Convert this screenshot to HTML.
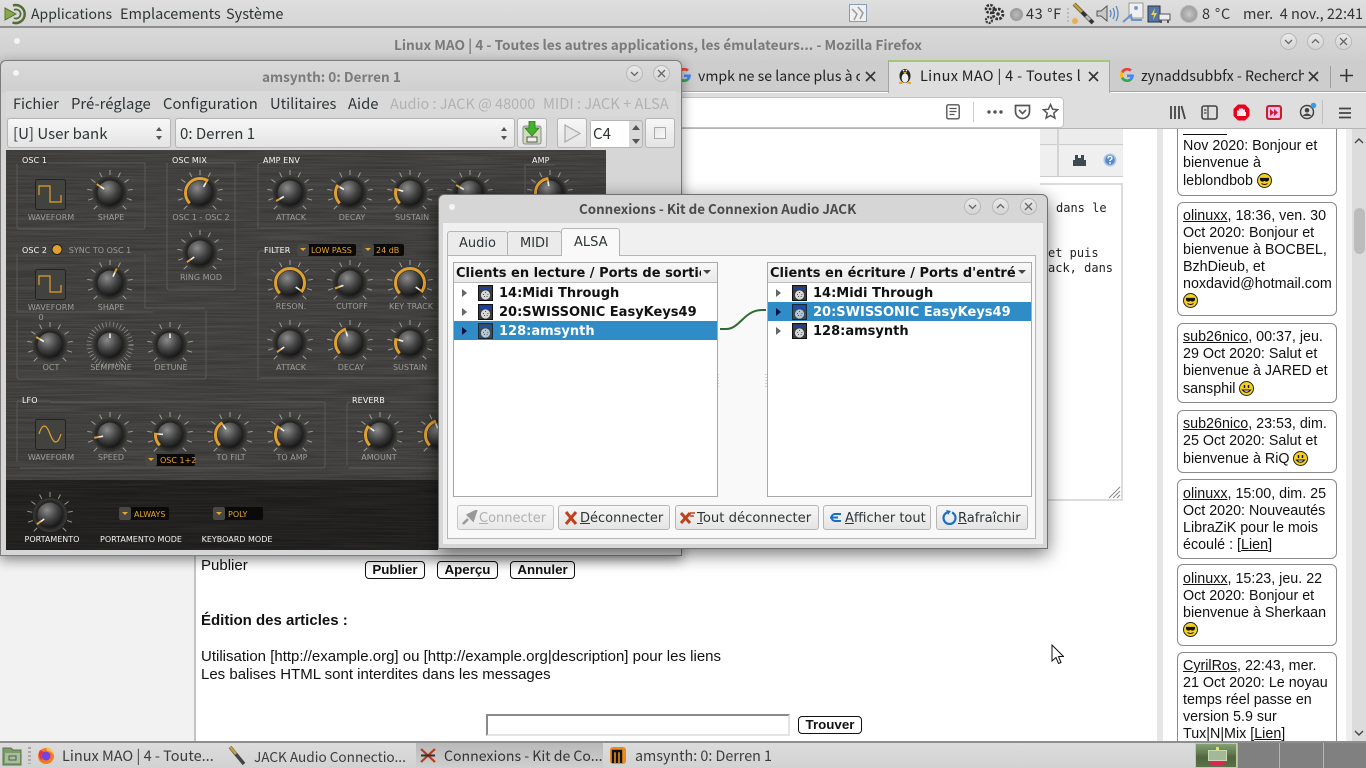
<!DOCTYPE html>
<html lang="fr"><head><meta charset="utf-8"><title>Linux MAO</title>
<style>
html,body{margin:0;padding:0;width:1366px;height:768px;overflow:hidden;background:#fff}
body{position:relative;font-family:"Liberation Sans",sans-serif}
div,span.a{box-sizing:border-box}
.b{position:absolute}
.t{position:absolute;white-space:nowrap;height:18px;line-height:18px}
.ui{font-family:"Noto Sans CJK SC","DejaVu Sans",sans-serif;font-size:14.5px;color:#3c3c3c}
.dj{font-family:"DejaVu Sans",sans-serif;font-size:13px;color:#2e3436}
.pg{font-family:"Liberation Sans",sans-serif;font-size:15px;color:#111}
.wbtn{position:absolute;width:17px;height:17px;border-radius:50%;background:linear-gradient(#e9e9e9,#d4d4d4);border:1px solid #b8b8b8}
.wbtn svg{position:absolute;left:3px;top:3px}
.gb{position:absolute;background:linear-gradient(#f7f7f7,#e4e4e4);border:1px solid #b5b5b5;border-radius:3px}
.fb{position:absolute;background:#fff;border:1px solid #111;border-radius:4px;font:bold 13.33px "Liberation Sans",sans-serif;color:#111;text-align:center;height:18px;line-height:16px}
.sb{position:absolute;left:1177px;width:160px;background:#fff;border:1px solid #8a8a8a;border-radius:6px;font:14.3px/17px "Liberation Sans",sans-serif;color:#111;padding:5px 0 0 5px;white-space:nowrap;overflow:hidden}
.sb u{text-decoration:underline}
.sm{display:inline-block;vertical-align:-3px;width:15px;height:15px}
.dn{position:relative;top:1px}
.row{position:absolute;height:19px;font:bold 13px/19px "DejaVu Sans",sans-serif;color:#111;white-space:nowrap}
.sel{background:#308cc6;color:#fff}
text{font-family:"DejaVu Sans",sans-serif}
.arc{fill:none;stroke:#e0a030;stroke-width:3}
</style></head><body>

<svg width="0" height="0" style="position:absolute"><defs>
<radialGradient id="ball" cx=".38" cy=".3" r=".8"><stop offset="0" stop-color="#8b8b8b"/><stop offset=".5" stop-color="#444"/><stop offset="1" stop-color="#0b0b0b"/></radialGradient>
<radialGradient id="ring" cx=".5" cy=".5" r=".5"><stop offset=".7" stop-color="#1c1c1b"/><stop offset="1" stop-color="#3a3a38"/></radialGradient>
<g id="tk" stroke="#b4b4b0" stroke-width="1" opacity=".8" fill="none">
<path d="M0-18V-23" transform="rotate(-135)"/><path d="M0-18V-23" transform="rotate(-108)"/><path d="M0-18V-23" transform="rotate(-81)"/><path d="M0-18V-23" transform="rotate(-54)"/><path d="M0-18V-23" transform="rotate(-27)"/><path d="M0-18V-23"/><path d="M0-18V-23" transform="rotate(27)"/><path d="M0-18V-23" transform="rotate(54)"/><path d="M0-18V-23" transform="rotate(81)"/><path d="M0-18V-23" transform="rotate(108)"/><path d="M0-18V-23" transform="rotate(135)"/>
</g>
<g id="k"><use href="#tk"/><circle r="17" fill="url(#ring)"/><circle r="12.5" fill="url(#ball)"/></g>
<g id="p"><path d="M0-11.5V-16" stroke="#e0a030" stroke-width="2"/><path d="M0-7V-11.5" stroke="#f0f0f0" stroke-width="1.6"/></g>
<g id="sm1"><circle cx="7.5" cy="7.5" r="7" fill="#f5d020" stroke="#222" stroke-width="1"/><path d="M3 5.5h9M3.5 5.5q0 2.5 2 2.5t2-2.5M7.5 5.5q0 2.5 2 2.5t2-2.5" stroke="#111" stroke-width="1.2" fill="#111"/><path d="M4.5 10.5q3 2 6 0" stroke="#111" fill="none"/></g>
<g id="sm2"><circle cx="7.5" cy="7.5" r="7" fill="#f5d020" stroke="#222" stroke-width="1"/><path d="M5.5 4v3M9.5 4v3" stroke="#111" stroke-width="1.4"/><path d="M3.5 9q4 4.5 8 0z" fill="#fff" stroke="#111"/></g>
<g id="mid"><rect x=".5" y=".5" width="14" height="15" fill="#3a3a3a" stroke="#111"/><rect x="2" y="2" width="11" height="3" fill="#1c3e9c"/><circle cx="7.5" cy="10" r="4.6" fill="#d8d8d8"/><path d="M5 9.500h.8M7 7.500h.8M9.500 9.500h.8M6 11.500h.8M8.700 11.500h.8" stroke="#333"/></g>
<g id="G"><path d="M13 6.5H7v2.6h3.5c-.4 1.6-1.7 2.4-3.5 2.4a4.5 4.5 0 010-9c1.1 0 2.1.4 2.9 1l1.9-1.9A7 7 0 107 14c3.8 0 6.9-2.7 6.9-7 0-.2 0-.4-.1-.5z" fill="#4285f4"/><path d="M1 3.5L3.3 5.2A4.5 4.5 0 017 2.5c1.1 0 2.1.4 2.9 1l1.9-1.9A7 7 0 001 3.5z" fill="#ea4335"/><path d="M1 10.5A7 7 0 007 14c1.8 0 3.5-.6 4.7-1.8l-2.2-1.7c-.7.5-1.5.9-2.5.9a4.5 4.5 0 01-3.7-2.4z" fill="#34a853"/><path d="M1 3.5a7 7 0 000 7l2.3-1.7a4.5 4.5 0 010-3.6z" fill="#fbbc05"/></g>
<filter id="br" x="0" y="0" width="100%" height="100%"><feTurbulence type="fractalNoise" baseFrequency=".012 .7" numOctaves="2" seed="4"/><feColorMatrix values="0 0 0 0 .9  0 0 0 0 .9  0 0 0 0 .88  0 0 0 .55 -.15"/></filter>
</defs></svg>

<!-- ============== FIREFOX ============== -->
<div class="b" style="left:0;top:28px;width:1366px;height:32px;background:linear-gradient(#d9d9d9,#cfcfcf)"></div>
<div class="b" style="left:14px;top:38px;width:6px;height:6px;background:#f4f4f4;border-radius:50%"></div>
<div class="t ui" style="left:394px;top:35px;font-weight:700;font-size:13.66px;color:#7a7a7a">Linux MAO | 4 - Toutes les autres applications, les émulateurs... - Mozilla Firefox</div>
<div class="wbtn" style="left:1280px;top:33px"><svg width="9" height="9"><path d="M1 3l3.5 3.5L8 3" fill="none" stroke="#666" stroke-width="1.3"/></svg></div>
<div class="wbtn" style="left:1307px;top:33px"><svg width="9" height="9"><path d="M1 6l3.5-3.5L8 6" fill="none" stroke="#666" stroke-width="1.3"/></svg></div>
<div class="wbtn" style="left:1335px;top:33px"><svg width="9" height="9"><path d="M1 1l7 7M8 1L1 8" fill="none" stroke="#666" stroke-width="1.3"/></svg></div>

<!-- page -->
<div class="b" style="left:0;top:129px;width:196px;height:613px;background:#f2f2f2;border-right:2px solid #c4c4c4"></div>
<div class="b" style="left:196px;top:129px;width:961px;height:613px;background:#fff"></div>
<div class="b" style="left:1157px;top:129px;width:6px;height:613px;background:#e6e6e6"></div>
<div class="b" style="left:1346px;top:129px;width:6px;height:613px;background:#eeeeee"></div>
<div class="b" style="left:1352px;top:129px;width:14px;height:613px;background:#dcdcdc"></div>
<svg class="b" style="left:1353px;top:137px" width="12" height="8"><path d="M2 6l4-4 4 4" fill="none" stroke="#444" stroke-width="1.400"/></svg>
<svg class="b" style="left:1353px;top:729px" width="12" height="8"><path d="M2 2l4 4 4-4" fill="none" stroke="#444" stroke-width="1.400"/></svg>
<div class="b" style="left:1354px;top:208px;width:11px;height:46px;background:#bcbcbc;border-radius:6px"></div>

<div class="b" style="left:1040px;top:129px;width:83px;height:16px;background:#ececec;border-bottom:1px solid #ccc"></div>
<div class="b" style="left:1040px;top:145px;width:83px;height:32px;background:#efefef;border-bottom:1px solid #ccc"></div>
<div class="b" style="left:1057px;top:129px;width:2px;height:47px;background:#d4d4d4"></div>
<svg class="b" style="left:1073px;top:155px" width="13" height="11"><path d="M0 5h13v6H0zM2 0h3v5H2zM8 0h3v5H8zM5 3h3v3H5z" fill="#3d4a50"/></svg>
<svg class="b" style="left:1103px;top:153px" width="14" height="14"><circle cx="7" cy="7" r="6.500" fill="#a9c6e9"/><circle cx="7" cy="7" r="4.800" fill="#5789c7"/><path d="M5 5.500q0-2 2-2t2 1.800q0 1-2 2V8" fill="none" stroke="#fff" stroke-width="1.300"/><circle cx="7" cy="10" r=".9" fill="#fff"/></svg>
<div class="b" style="left:1040px;top:183px;width:83px;height:318px;background:#fff;border:2px solid #dcdcdc;border-left:none"></div>
<svg class="b" style="left:1108px;top:486px" width="13" height="13"><path d="M12 1L1 12M12 5L5 12M12 9L9 12" stroke="#888" stroke-width="1"/></svg>
<div class="t" style="left:1056px;top:199px;font:12px/18px 'DejaVu Sans Mono',monospace;color:#222">dans le</div>
<div class="t" style="left:1048px;top:244px;font:12px/18px 'DejaVu Sans Mono',monospace;color:#222">et puis</div>
<div class="t" style="left:1048px;top:259px;font:12px/18px 'DejaVu Sans Mono',monospace;color:#222">ack, dans</div>

<div class="t pg" style="left:201px;top:557px">Publier</div>
<div class="fb" style="left:365px;top:561px;width:60px">Publier</div>
<div class="fb" style="left:437px;top:561px;width:61px">Aperçu</div>
<div class="fb" style="left:510px;top:561px;width:65px">Annuler</div>
<div class="t pg" style="left:201px;top:612px;font-weight:700">Édition des articles :</div>
<div class="t pg" style="left:201px;top:648px">Utilisation [http://example.org] ou [http://example.org|description] pour les liens</div>
<div class="t pg" style="left:201px;top:666px">Les balises HTML sont interdites dans les messages</div>
<div class="b" style="left:486px;top:714px;width:304px;height:22px;background:#fff;border:2px solid;border-color:#8a8a8a #e4e4e4 #e4e4e4 #8a8a8a"></div>
<div class="fb" style="left:798px;top:716px;width:64px">Trouver</div>

<div class="sb" style="top:120px;height:76px;padding-top:17px">Nov 2020: Bonjour et<br>bienvenue à<br><span class="dn">leblondbob <svg class="sm"><use href="#sm1"/></svg></span></div>
<div class="b" style="left:1183px;top:134px;width:44px;height:1px;background:#111"></div>
<div class="sb" style="top:202px;height:114px"><u>olinuxx</u>, 18:36, ven. 30<br>Oct 2020: Bonjour et<br>bienvenue à BOCBEL,<br>BzhDieub, et<br>noxdavid@hotmail.com<br><svg class="sm"><use href="#sm1"/></svg></div>
<div class="sb" style="top:323px;height:80px"><u>sub26nico</u>, 00:37, jeu.<br>29 Oct 2020: Salut et<br>bienvenue à JARED et<br><span class="dn">sansphil <svg class="sm"><use href="#sm2"/></svg></span></div>
<div class="sb" style="top:410px;height:63px"><u>sub26nico</u>, 23:53, dim.<br>25 Oct 2020: Salut et<br><span class="dn">bienvenue à RiQ <svg class="sm"><use href="#sm2"/></svg></span></div>
<div class="sb" style="top:479px;height:80px;padding-top:6px"><u>olinuxx</u>, 15:00, dim. 25<br>Oct 2020: Nouveautés<br>LibraZiK pour le mois<br>écoulé : [<u>Lien</u>]</div>
<div class="sb" style="top:564px;height:82px;padding-top:6px"><u>olinuxx</u>, 15:23, jeu. 22<br>Oct 2020: Bonjour et<br>bienvenue à Sherkaan<br><svg class="sm"><use href="#sm1"/></svg></div>
<div class="sb" style="top:652px;height:100px"><u>CyrilRos</u>, 22:43, mer.<br>21 Oct 2020: Le noyau<br>temps réel passe en<br>version 5.9 sur<br>Tux|N|Mix [<u>Lien</u>]</div>

<svg class="b" style="left:1051px;top:644px" width="13" height="21"><path d="M1 1v16l4-3.500 2.500 6 2.500-1-2.500-6h5z" fill="#fff" stroke="#111" stroke-width="1"/></svg>

<!-- tabs -->
<div class="b" style="left:0;top:60px;width:1366px;height:32px;background:#cdcdcd;border-bottom:1px solid #a5a5a5"></div>
<svg class="b" style="left:677px;top:68px" width="15" height="15"><use href="#G"/></svg>
<div class="t ui" style="left:698px;top:67px;color:#222;width:162px;overflow:hidden;font-size:14.1px">vmpk ne se lance plus à c</div>
<svg class="b" style="left:865px;top:71px" width="11" height="11"><path d="M1 1l9 9M10 1l-9 9" stroke="#333" stroke-width="1.6"/></svg>
<div class="b" style="left:888px;top:60px;width:222px;height:33px;background:#dedede;border-top:2px solid #a6c678;border-left:1px solid #a5a5a5;border-right:1px solid #a5a5a5"></div>
<svg class="b" style="left:897px;top:67px" width="16" height="17" viewBox="0 0 16 17"><ellipse cx="8" cy="9" rx="5.5" ry="7" fill="#222"/><ellipse cx="8" cy="11" rx="3.4" ry="4.6" fill="#eee"/><path d="M6 5h4l-2 2z" fill="#eba81c"/><path d="M2 15h4l-1 2H2zM10 15h4v2h-3z" fill="#eba81c"/><circle cx="6.6" cy="3.6" r=".9" fill="#fff"/><circle cx="9.4" cy="3.6" r=".9" fill="#fff"/></svg>
<div class="t ui" style="left:920px;top:67px;color:#222;width:163px;overflow:hidden;letter-spacing:.3px">Linux MAO | 4 - Toutes l</div>
<svg class="b" style="left:1088px;top:71px" width="11" height="11"><path d="M1 1l9 9M10 1l-9 9" stroke="#333" stroke-width="1.6"/></svg>
<svg class="b" style="left:1120px;top:68px" width="15" height="15"><use href="#G"/></svg>
<div class="t ui" style="left:1141px;top:67px;color:#222;width:163px;overflow:hidden;font-size:14.2px">zynaddsubbfx - Recherch</div>
<svg class="b" style="left:1308px;top:71px" width="11" height="11"><path d="M1 1l9 9M10 1l-9 9" stroke="#333" stroke-width="1.6"/></svg>
<div class="b" style="left:1330px;top:66px;width:1px;height:22px;background:#a0a0a0"></div>
<svg class="b" style="left:1340px;top:69px" width="13" height="13"><path d="M6.5 0v13M0 6.5h13" stroke="#333" stroke-width="1.6"/></svg>

<!-- toolbar -->
<div class="b" style="left:0;top:93px;width:1366px;height:36px;background:#dedede;border-bottom:1px solid #b4b4b4"></div>
<div class="b" style="left:600px;top:97px;width:464px;height:31px;background:#fff;border:1px solid #c2c2c2;border-radius:4px"></div>
<svg class="b" style="left:946px;top:104px" width="15" height="16"><rect x=".8" y=".8" width="12.4" height="14" rx="1.6" fill="none" stroke="#555" stroke-width="1.4"/><path d="M3.5 4.5h7M3.5 7.5h7M3.5 10.500h5" stroke="#555" stroke-width="1.2"/></svg>
<div class="b" style="left:973px;top:102px;width:1px;height:20px;background:#ccc"></div>
<svg class="b" style="left:986px;top:109px" width="18" height="6"><circle cx="3" cy="3" r="1.7" fill="#555"/><circle cx="9" cy="3" r="1.7" fill="#555"/><circle cx="15" cy="3" r="1.7" fill="#555"/></svg>
<svg class="b" style="left:1014px;top:104px" width="17" height="16"><path d="M1.500 1.500h14v6a7 7 0 01-14 0z" fill="none" stroke="#555" stroke-width="1.700"/><path d="M5 6l3.500 3.500L12 6" fill="none" stroke="#555" stroke-width="1.600"/></svg>
<svg class="b" style="left:1042px;top:103px" width="17" height="17"><path d="M8.500 1.500l2.100 4.700 5 .5-3.800 3.400 1.100 5-4.400-2.600-4.400 2.600 1.100-5L1.400 6.700l5-.5z" fill="none" stroke="#555" stroke-width="1.500"/></svg>
<svg class="b" style="left:1170px;top:105px" width="16" height="15"><path d="M1 1v13M5 1v13M9 1v13" stroke="#444" stroke-width="1.800"/><path d="M11.500 1l3.500 13" stroke="#444" stroke-width="1.800"/></svg>
<svg class="b" style="left:1201px;top:105px" width="17" height="15"><rect x="1" y="1" width="15" height="13" rx="2" fill="none" stroke="#444" stroke-width="1.600"/><path d="M7 1.500v12M3 5h2.500M3 8h2.500" stroke="#444" stroke-width="1.300"/></svg>
<svg class="b" style="left:1233px;top:104px" width="17" height="17" viewBox="0 0 17 17"><path d="M5 .5h7L16.500 5v7L12 16.500H5L.5 12V5z" fill="#e8001c"/><path d="M5 12V6.500M7 12V4.500M9 12V4.500M11 12V5.500M12 12V8" stroke="#fff" stroke-width="1.800"/></svg>
<svg class="b" style="left:1266px;top:105px" width="16" height="15"><rect width="16" height="15" rx="3" fill="#c4212a"/><rect x="2" y="2" width="12" height="11" rx="1.500" fill="#fbe"/><path d="M4 4l4 3.500L4 11zM8 4l4 3.500L8 11z" fill="#c4212a"/></svg>
<svg class="b" style="left:1298px;top:102px" width="20" height="18"><circle cx="9" cy="10" r="6.500" fill="none" stroke="#444" stroke-width="1.500"/><circle cx="9" cy="8.300" r="2.300" fill="#444"/><path d="M4.500 14q4.500-5 9 0z" fill="#444"/><circle cx="15.500" cy="3.500" r="2.800" fill="#2a9ff5"/></svg>
<div class="b" style="left:1322px;top:100px;width:1px;height:24px;background:#c0c0c0"></div>
<svg class="b" style="left:1338px;top:107px" width="14" height="12"><path d="M1 1.500h12M1 6h12M1 10.500h12" stroke="#444" stroke-width="1.800"/></svg>

<!-- ============== AMSYNTH ============== -->
<div class="b" style="left:0;top:60px;width:682px;height:496px;background:#d6d6d6;border:1px solid #7c7c7c;border-radius:6px 6px 0 0;box-shadow:0 4px 12px rgba(0,0,0,.45)"></div>
<div class="b" style="left:1px;top:61px;width:680px;height:31px;background:linear-gradient(#d9d9d9,#cfcfcf);border-radius:6px 6px 0 0"></div>
<div class="b" style="left:13px;top:70px;width:6px;height:6px;background:#f4f4f4;border-radius:50%"></div>
<div class="t ui" style="left:262px;top:67px;font-weight:700;font-size:13.6px;color:#7a7a7a">amsynth: 0: Derren 1</div>
<div class="wbtn" style="left:626px;top:65px"><svg width="9" height="9"><path d="M1 3l3.500 3.500L8 3" fill="none" stroke="#666" stroke-width="1.300"/></svg></div>
<div class="wbtn" style="left:653px;top:65px"><svg width="9" height="9"><path d="M1 1l7 7M8 1L1 8" fill="none" stroke="#666" stroke-width="1.300"/></svg></div>
<div class="b" style="left:6px;top:91px;width:670px;height:25px;background:#d9d9d9"></div>
<div class="t ui" style="left:13px;top:95px;color:#2e3436">Fichier</div>
<div class="t ui" style="left:71px;top:95px;color:#2e3436;font-size:14.9px">Pré-réglage</div>
<div class="t ui" style="left:163px;top:95px;color:#2e3436;font-size:14.8px">Configuration</div>
<div class="t ui" style="left:270px;top:95px;color:#2e3436;font-size:14.7px">Utilitaires</div>
<div class="t ui" style="left:348px;top:95px;color:#2e3436;font-size:14.8px">Aide</div>
<div class="t ui" style="left:390px;top:95px;color:#b2b2b2">Audio : JACK @ 48000</div>
<div class="t ui" style="left:543px;top:95px;color:#b2b2b2;font-size:14.7px">MIDI : JACK + ALSA</div>

<div class="gb" style="left:7px;top:118px;width:164px;height:30px"></div>
<div class="t ui" style="left:13px;top:125px;color:#2e3436;font-size:15px">[U] User bank</div>
<svg class="b" style="left:155px;top:127px" width="8" height="13"><path d="M4 0l3 4H1zM4 13l3-4H1z" fill="#555"/></svg>
<div class="gb" style="left:175px;top:118px;width:340px;height:30px"></div>
<div class="t ui" style="left:180px;top:125px;color:#2e3436;font-size:15px">0: Derren 1</div>
<svg class="b" style="left:500px;top:127px" width="8" height="13"><path d="M4 0l3 4H1zM4 13l3-4H1z" fill="#555"/></svg>
<div class="gb" style="left:517px;top:118px;width:30px;height:30px"></div>
<svg class="b" style="left:522px;top:121px" width="20" height="24"><rect x="1" y="5" width="18" height="18" rx="2" fill="#d2dcb8" stroke="#889"/><rect x="5" y="16" width="10" height="5" fill="#eee" stroke="#555"/><path d="M7 0h6v7h4l-7 8-7-8h4z" fill="#45b02e" stroke="#2a7a1a" stroke-width=".8"/></svg>
<div class="gb" style="left:557px;top:118px;width:30px;height:30px"></div>
<svg class="b" style="left:564px;top:124px" width="17" height="19"><path d="M1 1l15 8.500L1 18z" fill="#e6e6e6" stroke="#aaa" stroke-width="1.200"/></svg>
<div class="b" style="left:590px;top:120px;width:53px;height:28px;background:#d9d9d9;border:1px solid #b5b5b5;border-radius:3px"></div>
<div class="b" style="left:591px;top:121px;width:38px;height:26px;background:#fff"></div>
<div class="t ui" style="left:593px;top:125px;color:#2e3436;font-size:15px">C4</div>
<svg class="b" style="left:631px;top:124px" width="10" height="21"><path d="M5 1l4 5H1zM5 20l4-5H1z" fill="#555"/></svg>
<div class="gb" style="left:645px;top:118px;width:30px;height:30px"></div>
<div class="b" style="left:654px;top:127px;width:12px;height:12px;background:linear-gradient(135deg,#e8e8e8,#f8f8f8);border:1px solid #aaa"></div>

<svg class="b" style="left:0;top:0" width="682" height="556" viewBox="0 0 682 556">
<rect x="6" y="150" width="600" height="330" fill="#3a3937"/>
<rect x="6" y="150" width="600" height="330" filter="url(#br)" opacity=".35"/>
<rect x="6" y="480" width="432" height="70" fill="#1d1c1b"/>
<rect x="6" y="480" width="432" height="70" filter="url(#br)" opacity=".2"/>
<g fill="none" stroke="#5a5956" stroke-width="1">
<path d="M17 164V226q0 3 3 3H143q2 0 2-3V163H48"/>
<path d="M167 163V287q0 3 3 3H233q2 0 2-3V163H206"/>
<path d="M258 229V166q0-3 3-3H296M260 228H440"/>
<path d="M17 254V312h136M206 311V376q0 3-2 3H20q-3 0-3-3V320M145 254V308h60"/>
<path d="M258 380V254q0-3 3-3H290M260 378H440"/>
<path d="M17 401H50M17 401V462M20 468H323q2 0 2-3V402H50"/>
<path d="M347 465V405q0-3 3-3M349 468H440M390 402H440"/>
<path d="M525 228V165H555M525 228H606"/>
</g>
<g font-size="8" fill="#f6f6f6" letter-spacing=".1">
<text x="22" y="163">OSC 1</text><text x="172" y="163">OSC MIX</text><text x="263" y="163">AMP ENV</text><text x="532" y="163">AMP</text>
<text x="22" y="253">OSC 2</text><text x="264" y="253">FILTER</text><text x="22" y="403">LFO</text><text x="352" y="403">REVERB</text>
</g>
<circle cx="57" cy="249.500" r="5" fill="#e0a030" stroke="#222"/>
<g font-size="8" fill="#9c9c98" text-anchor="middle">
<text x="100" y="253">SYNC TO OSC 1</text>
<text x="51" y="220">WAVEFORM</text><text x="111" y="220">SHAPE</text><text x="201" y="220">OSC 1 - OSC 2</text>
<text x="291" y="220">ATTACK</text><text x="352" y="220">DECAY</text><text x="412" y="220">SUSTAIN</text><text x="201" y="280">RING MOD</text>
<text x="51" y="310">WAVEFORM</text><text x="111" y="310">SHAPE</text><text x="41" y="320">0</text>
<text x="291" y="309">RESON.</text><text x="352" y="309">CUTOFF</text><text x="411" y="309">KEY TRACK</text>
<text x="51" y="370">OCT</text><text x="111" y="370">SEMITONE</text><text x="171" y="370">DETUNE</text>
<text x="291" y="370">ATTACK</text><text x="351" y="370">DECAY</text><text x="410" y="370">SUSTAIN</text>
<text x="51" y="460">WAVEFORM</text><text x="111" y="460">SPEED</text><text x="231" y="460">TO FILT</text><text x="292" y="460">TO AMP</text><text x="379" y="460">AMOUNT</text>
</g>
<g font-size="8" fill="#f2f2f2" text-anchor="middle">
<text x="52" y="542">PORTAMENTO</text><text x="141" y="542">PORTAMENTO MODE</text><text x="237" y="542">KEYBOARD MODE</text>
</g>
<!-- wave buttons -->
<g fill="#42423f" stroke="#222"><rect x="35.500" y="179.500" width="30" height="30" rx="2"/><rect x="35.500" y="269.500" width="30" height="30" rx="2"/><rect x="35.500" y="419.500" width="30" height="30" rx="2"/></g>
<g fill="none" stroke="#e0a030" stroke-width="1.200"><path d="M39 195V186H50V202H61V195"/><path d="M39 285V276H50V292H61V285"/><path d="M39 434Q44 418 50 434T61 434"/></g>
<!-- dropdowns -->
<g font-family="DejaVu Sans Mono" font-size="8" fill="#e8a630">
<rect x="297" y="244" width="59" height="12" rx="2" fill="#0a0a0a"/><rect x="297" y="244" width="12" height="12" rx="2" fill="#484846"/><path d="M300 248h6l-3 3z"/><text x="311" y="253">LOW PASS</text>
<rect x="362" y="244" width="42" height="12" rx="2" fill="#0a0a0a"/><rect x="362" y="244" width="12" height="12" rx="2" fill="#484846"/><path d="M365 248h6l-3 3z"/><text x="376" y="253">24 dB</text>
<rect x="145" y="454" width="50" height="12" rx="2" fill="#0a0a0a"/><rect x="145" y="454" width="12" height="12" rx="2" fill="#484846"/><path d="M148 458h6l-3 3z"/><text x="160" y="463">OSC 1+2</text>
<rect x="119" y="507" width="50" height="13" rx="2" fill="#0a0a0a"/><rect x="119" y="507" width="12" height="13" rx="2" fill="#484846"/><path d="M122 512h6l-3 3z"/><text x="134" y="517">ALWAYS</text>
<rect x="213" y="507" width="50" height="13" rx="2" fill="#0a0a0a"/><rect x="213" y="507" width="12" height="13" rx="2" fill="#484846"/><path d="M216 512h6l-3 3z"/><text x="228" y="517">POLY</text>
</g>
<!-- knobs -->
<g>
<g transform="translate(110,193)"><use href="#k"/><g transform="rotate(-56)"><use href="#p"/></g></g>
<g transform="translate(200,193)"><use href="#k"/><circle class="arc" r="14.500" pathLength="360" stroke-dasharray="165 360" transform="rotate(135)"/><g transform="rotate(30)"><use href="#p"/></g></g>
<g transform="translate(200,253)"><use href="#k"/><g transform="rotate(-125)"><use href="#p"/></g></g>
<g transform="translate(290,193)"><use href="#k"/><g transform="rotate(-120)"><use href="#p"/></g></g>
<g transform="translate(350,193)"><use href="#k"/><circle class="arc" r="14.500" pathLength="360" stroke-dasharray="75 360" transform="rotate(135)"/><g transform="rotate(-60)"><use href="#p"/></g></g>
<g transform="translate(410,193)"><use href="#k"/><circle class="arc" r="14.500" pathLength="360" stroke-dasharray="60 360" transform="rotate(135)"/><g transform="rotate(-75)"><use href="#p"/></g></g>
<g transform="translate(470,193)"><use href="#k"/><g transform="rotate(-60)"><use href="#p"/></g></g>
<g transform="translate(550,193)"><use href="#k"/><circle class="arc" r="14.500" pathLength="360" stroke-dasharray="125 360" transform="rotate(135)"/><g transform="rotate(-10)"><use href="#p"/></g></g>
<g transform="translate(110,283)"><use href="#k"/><g transform="rotate(25)"><use href="#p"/></g></g>
<g transform="translate(50,345)"><use href="#k"/><g transform="rotate(-60)"><use href="#p"/></g></g>
<g transform="translate(110,345)"><circle r="21" fill="none" stroke="#a8a8a4" stroke-width="5" pathLength="360" stroke-dasharray="2 8" opacity=".8"/><circle r="17" fill="url(#ring)"/><circle r="12.500" fill="url(#ball)"/><path d="M0-7V-11.500" stroke="#f0f0f0" stroke-width="1.600"/></g>
<g transform="translate(170,345)"><use href="#k"/><path d="M0-7V-11.500" stroke="#f0f0f0" stroke-width="1.600"/></g>
<g transform="translate(290,283)"><use href="#k"/><circle class="arc" r="14.500" pathLength="360" stroke-dasharray="260 360" transform="rotate(135)"/><g transform="rotate(125)"><use href="#p"/></g></g>
<g transform="translate(350,283)"><use href="#k"/><g transform="rotate(-110)"><use href="#p"/></g></g>
<g transform="translate(410,283)"><use href="#k"/><circle class="arc" r="14.500" pathLength="360" stroke-dasharray="260 360" transform="rotate(135)"/><g transform="rotate(125)"><use href="#p"/></g></g>
<g transform="translate(290,343)"><use href="#k"/><g transform="rotate(-125)"><use href="#p"/></g></g>
<g transform="translate(350,343)"><use href="#k"/><circle class="arc" r="14.500" pathLength="360" stroke-dasharray="115 360" transform="rotate(135)"/><g transform="rotate(-20)"><use href="#p"/></g></g>
<g transform="translate(410,343)"><use href="#k"/><circle class="arc" r="14.500" pathLength="360" stroke-dasharray="60 360" transform="rotate(135)"/><g transform="rotate(-75)"><use href="#p"/></g></g>
<g transform="translate(110,435)"><use href="#k"/><g transform="rotate(-100)"><use href="#p"/></g></g>
<g transform="translate(170,435)"><use href="#k"/><circle class="arc" r="14.500" pathLength="360" stroke-dasharray="50 360" transform="rotate(135)"/><g transform="rotate(-85)"><use href="#p"/></g></g>
<g transform="translate(230,435)"><use href="#k"/><circle class="arc" r="14.500" pathLength="360" stroke-dasharray="100 360" transform="rotate(135)"/><g transform="rotate(-35)"><use href="#p"/></g></g>
<g transform="translate(290,435)"><use href="#k"/><circle class="arc" r="14.500" pathLength="360" stroke-dasharray="80 360" transform="rotate(135)"/><g transform="rotate(-55)"><use href="#p"/></g></g>
<g transform="translate(380,435)"><use href="#k"/><circle class="arc" r="14.500" pathLength="360" stroke-dasharray="80 360" transform="rotate(135)"/><g transform="rotate(-55)"><use href="#p"/></g></g>
<g transform="translate(440,435)"><use href="#k"/><circle class="arc" r="14.500" pathLength="360" stroke-dasharray="115 360" transform="rotate(135)"/><g transform="rotate(-20)"><use href="#p"/></g></g>
<g transform="translate(50,515)"><use href="#k"/><g transform="rotate(-125)"><use href="#p"/></g></g>
</g>
</svg>

<!-- ============== DIALOG ============== -->
<div class="b" style="left:438px;top:194px;width:610px;height:355px;background:#d6d6d6;border:1px solid #6f6f6f;border-radius:6px 6px 0 0;box-shadow:0 5px 18px rgba(0,0,0,.55)"></div>
<div class="b" style="left:449px;top:204px;width:6px;height:6px;background:#f4f4f4;border-radius:50%"></div>
<div class="t ui" style="left:579px;top:200px;font-weight:700;font-size:13.35px;color:#4a4a4a">Connexions - Kit de Connexion Audio JACK</div>
<div class="wbtn" style="left:964px;top:198px"><svg width="9" height="9"><path d="M1 3l3.500 3.500L8 3" fill="none" stroke="#666" stroke-width="1.300"/></svg></div>
<div class="wbtn" style="left:992px;top:198px"><svg width="9" height="9"><path d="M1 6l3.500-3.500L8 6" fill="none" stroke="#666" stroke-width="1.300"/></svg></div>
<div class="wbtn" style="left:1020px;top:198px"><svg width="9" height="9"><path d="M1 1l7 7M8 1L1 8" fill="none" stroke="#666" stroke-width="1.300"/></svg></div>
<div class="b" style="left:443px;top:223px;width:600px;height:321px;background:#f0f0f0"></div>
<div class="b" style="left:447px;top:255px;width:589px;height:284px;background:#f9f9f9;border:1px solid #b5b5b5"></div>
<div class="b" style="left:447px;top:231px;width:61px;height:25px;background:#ebebeb;border:1px solid #b5b5b5;border-radius:3px 3px 0 0"></div>
<div class="b" style="left:507px;top:231px;width:55px;height:25px;background:#ebebeb;border:1px solid #b5b5b5;border-radius:3px 3px 0 0"></div>
<div class="b" style="left:561px;top:228px;width:59px;height:28px;background:#f9f9f9;border:1px solid #b5b5b5;border-bottom:none;border-radius:3px 3px 0 0"></div>
<div class="t dj" style="left:459px;top:235px">Audio</div>
<div class="t dj" style="left:520px;top:235px">MIDI</div>
<div class="t dj" style="left:574px;top:234px">ALSA</div>

<div class="b" style="left:453px;top:262px;width:265px;height:235px;background:#fff;border:1px solid #a8a8a8"></div>
<div class="b" style="left:454px;top:263px;width:263px;height:20px;background:linear-gradient(#f8f8f8,#e9e9e9);border-bottom:1px solid #bdbdbd"></div>
<div class="row" style="left:456px;top:264px;width:245px;overflow:hidden">Clients en lecture / Ports de sortie</div>
<svg class="b" style="left:703px;top:270px" width="9" height="5"><path d="M0 0h8l-4 4z" fill="#444"/></svg>
<div class="b sel" style="left:454px;top:321px;width:263px;height:19px"></div>
<svg class="b" style="left:462px;top:289px" width="5" height="8"><path d="M0 0l5 4-5 4z" fill="#666"/></svg>
<svg class="b" style="left:462px;top:308px" width="5" height="8"><path d="M0 0l5 4-5 4z" fill="#666"/></svg>
<svg class="b" style="left:462px;top:327px" width="5" height="8"><path d="M0 0l5 4-5 4z" fill="#114"/></svg>
<svg class="b" style="left:478px;top:285px" width="15" height="16"><use href="#mid"/></svg>
<svg class="b" style="left:478px;top:304px" width="15" height="16"><use href="#mid"/></svg>
<svg class="b" style="left:478px;top:323px" width="15" height="16" opacity=".8"><use href="#mid"/></svg>
<div class="row" style="left:499px;top:284px">14:Midi Through</div>
<div class="row" style="left:499px;top:303px">20:SWISSONIC EasyKeys49</div>
<div class="row" style="left:499px;top:322px;color:#fff">128:amsynth</div>

<svg class="b" style="left:718px;top:305px" width="50" height="30"><path d="M2 24h6c14 0 18-19 36-19h4" fill="none" stroke="#2f6a33" stroke-width="2"/></svg>
<svg class="b" style="left:717px;top:373px" width="4" height="16"><path d="M1 1v14" stroke="#aaa" stroke-dasharray="1 2"/></svg>
<svg class="b" style="left:765px;top:373px" width="4" height="16"><path d="M1 1v14" stroke="#aaa" stroke-dasharray="1 2"/></svg>

<div class="b" style="left:767px;top:262px;width:265px;height:235px;background:#fff;border:1px solid #a8a8a8"></div>
<div class="b" style="left:768px;top:263px;width:263px;height:20px;background:linear-gradient(#f8f8f8,#e9e9e9);border-bottom:1px solid #bdbdbd"></div>
<div class="row" style="left:770px;top:264px;width:246px;overflow:hidden">Clients en écriture / Ports d'entrée</div>
<svg class="b" style="left:1018px;top:270px" width="9" height="5"><path d="M0 0h8l-4 4z" fill="#444"/></svg>
<div class="b sel" style="left:768px;top:302px;width:263px;height:19px"></div>
<svg class="b" style="left:776px;top:289px" width="5" height="8"><path d="M0 0l5 4-5 4z" fill="#666"/></svg>
<svg class="b" style="left:776px;top:308px" width="5" height="8"><path d="M0 0l5 4-5 4z" fill="#114"/></svg>
<svg class="b" style="left:776px;top:327px" width="5" height="8"><path d="M0 0l5 4-5 4z" fill="#666"/></svg>
<svg class="b" style="left:792px;top:285px" width="15" height="16"><use href="#mid"/></svg>
<svg class="b" style="left:792px;top:304px" width="15" height="16" opacity=".8"><use href="#mid"/></svg>
<svg class="b" style="left:792px;top:323px" width="15" height="16"><use href="#mid"/></svg>
<div class="row" style="left:813px;top:284px">14:Midi Through</div>
<div class="row" style="left:813px;top:303px;color:#fff">20:SWISSONIC EasyKeys49</div>
<div class="row" style="left:813px;top:322px">128:amsynth</div>

<div class="gb" style="left:457px;top:505px;width:97px;height:25px;opacity:.75"></div>
<svg class="b" style="left:462px;top:510px" width="16" height="15"><path d="M1 14l5-5M6 5l5 5 3-9z" stroke="#999" stroke-width="2.500" fill="#999"/></svg>
<div class="t dj" style="left:479px;top:510px;color:#b0b0b0"><u>C</u>onnecter</div>
<div class="gb" style="left:558px;top:505px;width:112px;height:25px"></div>
<svg class="b" style="left:564px;top:511px" width="14" height="14"><path d="M2 1l10 12M12 1L2 13" stroke="#c0401c" stroke-width="3"/></svg>
<div class="t dj" style="left:580px;top:510px"><u>D</u>éconnecter</div>
<div class="gb" style="left:675px;top:505px;width:144px;height:25px"></div>
<svg class="b" style="left:680px;top:511px" width="16" height="14"><path d="M1 2l9 10M10 2l-9 10" stroke="#c0401c" stroke-width="3"/><path d="M10 2h5M10 5h4" stroke="#c0401c" stroke-width="1.500"/></svg>
<div class="t dj" style="left:697px;top:510px;font-size:13.2px"><u>T</u>out déconnecter</div>
<div class="gb" style="left:823px;top:505px;width:108px;height:25px"></div>
<svg class="b" style="left:829px;top:511px" width="14" height="13"><path d="M12 3H6a3.500 3.500 0 000 7h6M1 6.500h8" fill="none" stroke="#1a6fc4" stroke-width="2"/></svg>
<div class="t dj" style="left:845px;top:510px"><u>A</u>fficher tout</div>
<div class="gb" style="left:936px;top:505px;width:92px;height:25px"></div>
<svg class="b" style="left:942px;top:510px" width="15" height="15"><path d="M10 2.500a6 6 0 11-5 0" fill="none" stroke="#1a6fc4" stroke-width="2.200"/><path d="M4 0l5 1-3 4z" fill="#1a6fc4"/></svg>
<div class="t dj" style="left:958px;top:510px"><u>R</u>afraîchir</div>

<!-- ============== TOP PANEL ============== -->
<div class="b" style="left:0;top:0;width:1366px;height:28px;background:linear-gradient(#dfdfdf,#d5d5d5);border-bottom:2px solid #8e8e8e"></div>
<svg class="b" style="left:4px;top:2px" width="24" height="24" viewBox="0 0 24 24"><path d="M9 3.500a9 9 0 11-.5 17" fill="none" stroke="#556b35" stroke-width="2.500"/><path d="M10 8a4.500 4.500 0 110 8" fill="none" stroke="#556b35" stroke-width="1.800"/><path d="M1 6l11 6-11 6z" fill="#87a84e" stroke="#5c7536"/></svg>
<div class="t ui" style="left:31px;top:5px;color:#2e3436;font-size:14px">Applications</div>
<div class="t ui" style="left:120px;top:5px;color:#2e3436">Emplacements</div>
<div class="t ui" style="left:226px;top:5px;color:#2e3436">Système</div>
<svg class="b" style="left:849px;top:4px" width="18" height="18"><rect x=".5" y=".5" width="17" height="17" fill="#eef0f2" stroke="#8a9ab0"/><path d="M3 5l5 5-3 6M9 3l5 6-3 6" fill="none" stroke="#9a9a9a" stroke-width="1.500"/></svg>
<svg class="b" style="left:983px;top:3px" width="22" height="22"><circle cx="7" cy="6" r="4" fill="#ddd" stroke="#333" stroke-width="2.600" stroke-dasharray="2.500 1.300"/><circle cx="7" cy="6" r="1.400" fill="#333"/><circle cx="15" cy="11" r="5" fill="#ddd" stroke="#333" stroke-width="2.800" stroke-dasharray="2.600 1.300"/><circle cx="15" cy="11" r="1.800" fill="#333"/><circle cx="6" cy="17" r="3" fill="#ddd" stroke="#333" stroke-width="2.200" stroke-dasharray="2 1"/></svg>
<div class="b" style="left:1010px;top:8px;width:13px;height:13px;border-radius:50%;background:radial-gradient(#bbb,#999 70%,#ccc)"></div>
<div class="t ui" style="left:1026px;top:5px;color:#333;letter-spacing:.6px">43 °F</div>
<svg class="b" style="left:1065px;top:2px" width="30" height="23"><path d="M9 2l19 19" stroke="#333" stroke-width="4"/><path d="M9 2l8 8" stroke="#c2a13c" stroke-width="3"/><path d="M21 14l4 4" stroke="#bbb" stroke-width="3"/><path d="M3 6v14" stroke="#bbb" stroke-dasharray="2 2" stroke-width="2"/><circle cx="10" cy="19" r="3" fill="#e8b050"/></svg>
<svg class="b" style="left:1096px;top:4px" width="24" height="20"><path d="M1 7h4l6-5v15l-6-5H1z" fill="#c8c8c8" stroke="#555"/><path d="M14 6q2 3.500 0 7M17 4q3 5.500 0 11M20 2q4 7.500 0 15" fill="none" stroke="#5a88c0" stroke-width="1.300"/></svg>
<svg class="b" style="left:1121px;top:2px" width="24" height="22"><rect x="8" y="1" width="14" height="15" fill="#f0f0f0" stroke="#999"/><circle cx="15" cy="6" r="2" fill="#7a9cc9"/><path d="M2 20l8-7 1 5 10 0" fill="none" stroke="#6a95cc" stroke-width="2"/></svg>
<svg class="b" style="left:1147px;top:2px" width="24" height="23"><rect x="1" y="4" width="12" height="16" fill="#5577a8" stroke="#334"/><path d="M8 6l-4 7h3l-1 5 4-7H7z" fill="#f0d040"/><rect x="12" y="12" width="11" height="6" fill="#eee" stroke="#555"/><path d="M14 18v3M21 18v3" stroke="#555" stroke-width="2"/></svg>
<div class="b" style="left:1180px;top:5px;width:18px;height:18px;border-radius:50%;background:radial-gradient(#c8c8c8,#a0a0a0 65%,#d0d0d0);border:1px solid #bbb"></div>
<div class="t ui" style="left:1202px;top:5px;color:#333;letter-spacing:.8px">8 °C</div>
<div class="t ui" style="left:1243px;top:5px;color:#333">mer.&nbsp; 4 nov., 22:41</div>

<!-- ============== TASKBAR ============== -->
<div class="b" style="left:0;top:741px;width:1366px;height:27px;background:linear-gradient(#dcdcdc,#d2d2d2);border-top:2px solid #8e8e8e"></div>
<svg class="b" style="left:2px;top:745px" width="21" height="21"><path d="M1 5V3h8l2 2h8v15H1z" fill="#7d9a6a" stroke="#5b7350"/><rect x="3" y="8" width="15" height="10" fill="#a5c094"/><rect x="7" y="11" width="7" height="4" fill="none" stroke="#556"/></svg>
<div class="b" style="left:28px;top:747px;width:3px;height:17px;background:repeating-linear-gradient(#aaa 0 2px,transparent 2px 4px)"></div>
<svg class="b" style="left:37px;top:746px" width="18" height="19"><circle cx="9" cy="10" r="8" fill="#f57a1e"/><circle cx="9" cy="10" r="4.500" fill="#7542e5"/><path d="M9 1q7 1 8 9-2-5-7-5z" fill="#ffbd4f"/><path d="M3 4q-3 6 2 11-1-6 2-9z" fill="#e8314c"/></svg>
<div class="t ui" style="left:62px;top:747px;color:#3c3c3c">Linux MAO | 4 - Toute...</div>
<svg class="b" style="left:228px;top:746px" width="18" height="20"><path d="M2 1l14 17" stroke="#444" stroke-width="3.500"/><path d="M2 1l6 7" stroke="#c2a13c" stroke-width="2.500"/></svg>
<div class="t ui" style="left:254px;top:747px;color:#3c3c3c;font-size:13.6px">JACK Audio Connectio...</div>
<div class="b" style="left:416px;top:743px;width:187px;height:25px;background:linear-gradient(#b9b9b9,#cfcfcf)"></div>
<svg class="b" style="left:420px;top:748px" width="16" height="15"><path d="M1 1l14 13M15 1L1 14" stroke="#b83a1a" stroke-width="2.200"/><path d="M1 7.500h14" stroke="#333" stroke-width="2"/></svg>
<div class="t ui" style="left:444px;top:747px;color:#333;font-size:14.1px">Connexions - Kit de Co...</div>
<svg class="b" style="left:610px;top:747px" width="16" height="17"><rect width="16" height="17" rx="3" fill="#e88a1e"/><path d="M3 16V4h4v12M7 4h4v12" fill="none" stroke="#111" stroke-width="2.400"/></svg>
<div class="t ui" style="left:635px;top:747px;color:#3c3c3c;font-size:14.3px">amsynth: 0: Derren 1</div>
<!-- workspaces -->
<div class="b" style="left:1195px;top:743px;width:171px;height:25px;background:#808080"></div>
<div class="b" style="left:1279px;top:743px;width:1px;height:25px;background:#b5b5b5"></div>
<div class="b" style="left:1323px;top:743px;width:1px;height:25px;background:#b5b5b5"></div>
<div class="b" style="left:1237px;top:743px;width:1px;height:25px;background:#b5b5b5"></div>
<div class="b" style="left:1195px;top:743px;width:42px;height:25px;background:linear-gradient(#84a272,#4f6440 60%,#5c7049);border:1px solid #b6d19b"></div>
<div class="b" style="left:1208px;top:750px;width:19px;height:11px;background:#a3b89a;border:1px solid #c8dcae"></div>
<div class="b" style="left:1209px;top:761px;width:17px;height:4px;background:#e0245a;border-radius:0 0 8px 8px"></div>
<div class="b" style="left:1216px;top:747px;width:3px;height:3px;background:#e8e060"></div>
</body></html>
